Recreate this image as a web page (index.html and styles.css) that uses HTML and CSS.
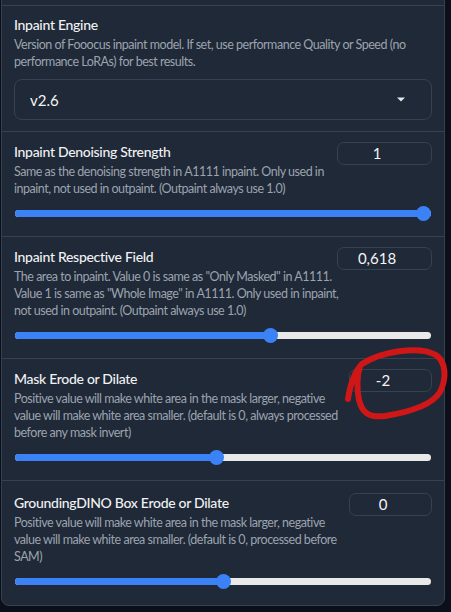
FILE: index.html
```html
<!DOCTYPE html>
<html lang="en">
<head>
<meta charset="utf-8">
<link rel="stylesheet" href="styles.css">
</head>
<body>
<div class="panel">
  <div class="spacer"></div>

  <section class="block">
    <div class="label">Inpaint Engine</div>
    <div class="info">Version of Fooocus inpaint model. If set, use performance Quality or Speed (no<br>performance LoRAs) for best results.</div>
    <div class="dropdown">
      <span class="value">v2.6</span>
      <svg class="caret" width="8" height="5" viewBox="0 0 8 5"><path d="M0 0.5 L8 0.5 L4 4.5 Z" fill="#e5e7eb"/></svg>
    </div>
  </section>

  <section class="block">
    <div class="head">
      <div class="text">
        <div class="label">Inpaint Denoising Strength</div>
        <div class="info">Same as the denoising strength in A1111 inpaint. Only used in<br>inpaint, not used in outpaint. (Outpaint always use 1.0)</div>
      </div>
      <div class="num wide">1</div>
    </div>
    <div class="slider" style="--p:1"><div class="fill"></div><div class="thumb"></div></div>
  </section>

  <section class="block">
    <div class="head">
      <div class="text">
        <div class="label">Inpaint Respective Field</div>
        <div class="info">The area to inpaint. Value 0 is same as "Only Masked" in A1111.<br>Value 1 is same as "Whole Image" in A1111. Only used in inpaint,<br>not used in outpaint. (Outpaint always use 1.0)</div>
      </div>
      <div class="num wide">0,618</div>
    </div>
    <div class="slider" style="--p:0.618"><div class="fill"></div><div class="thumb"></div></div>
  </section>

  <section class="block">
    <div class="head">
      <div class="text">
        <div class="label">Mask Erode or Dilate</div>
        <div class="info">Positive value will make white area in the mask larger, negative<br>value will make white area smaller. (default is 0, always processed<br>before any mask invert)</div>
      </div>
      <div class="num narrow">-2</div>
    </div>
    <div class="slider" style="--p:0.4844"><div class="fill"></div><div class="thumb"></div></div>
  </section>

  <section class="block last">
    <div class="head">
      <div class="text">
        <div class="label">GroundingDINO Box Erode or Dilate</div>
        <div class="info">Positive value will make white area in the mask larger, negative<br>value will make white area smaller. (default is 0, processed before<br>SAM)</div>
      </div>
      <div class="num narrow">0</div>
    </div>
    <div class="slider" style="--p:0.5"><div class="fill"></div><div class="thumb"></div></div>
  </section>
</div>

<svg class="scribble" width="451" height="612" viewBox="0 0 451 612">
  <path d="M348 399 C350 386 354 372 362 364 C380 352 418 345 436 355 C446 362 447 378 440 392 C432 405 410 412 385 416 C368 418 362 412 359 400 C357 390 357 376 360 366"
        fill="none" stroke="#d01717" stroke-width="6" stroke-linecap="round" stroke-linejoin="round"/>
</svg>
</body>
</html>
```

FILE: styles.css
```css
html, body {
  margin: 0;
  padding: 0;
}
body {
  background: #0b0f19;
  width: 451px;
  height: 612px;
  overflow: hidden;
  position: relative;
  font-family: "Lato", "Source Sans Pro", "Noto Sans", sans-serif;
}
.panel {
  box-sizing: border-box;
  width: 444px;
  margin: -12px 0 0 1px;
  background: #1f2937;
  border: 1px solid #374151;
  border-radius: 8px;
}
.spacer {
  height: 16px;
  border-bottom: 1px solid #374151;
}
.block {
  padding: 10px 12px 15px 12px;
  border-bottom: 1px solid #374151;
}
.block:first-of-type {
  padding-top: 9px;
  padding-bottom: 11px;
}
.block.last {
  border-bottom: none;
  padding-top: 12px;
  padding-bottom: 16px;
}
.label {
  color: #f0f1f3;
  font-size: 14px;
  letter-spacing: -0.3px;
  line-height: 20px;
  font-weight: 500;
  white-space: nowrap;
}
.info {
  margin-top: 1px;
  color: #9ca3af;
  font-size: 12.5px;
  letter-spacing: -0.48px;
  line-height: 17px;
  white-space: nowrap;
}
.text {
  min-width: 0;
}
.dropdown {
  margin-top: 9px;
  height: 39px;
  border: 1px solid #374151;
  border-radius: 8px;
  display: flex;
  align-items: center;
  justify-content: space-between;
  padding: 0 26px 0 15px;
}
.dropdown .value {
  color: #f3f4f6;
  font-size: 15px;
}
.caret {
  display: block;
}
.head {
  display: flex;
  align-items: flex-start;
  justify-content: space-between;
  gap: 8px;
}
.num {
  box-sizing: border-box;
  height: 23px;
  border: 1px solid #374151;
  border-radius: 7px;
  color: #f3f4f6;
  font-size: 15px;
  line-height: 21px;
  text-align: center;
  padding-right: 15px;
  flex: none;
}
.num.wide { width: 95px; }
.num.narrow { width: 83px; }
.slider {
  position: relative;
  margin: 9px 0 0 1px;
  width: 416px;
  height: 15px;
}
.slider::before {
  content: "";
  position: absolute;
  left: 0;
  right: 0;
  top: 4px;
  height: 7px;
  border-radius: 4px;
  background: #e9e9e9;
}
.fill {
  position: absolute;
  left: 0;
  top: 4px;
  height: 7px;
  border-radius: 4px;
  background: #3b82f6;
  width: calc(var(--p) * (100% - 15px) + 7.5px);
}
.thumb {
  position: absolute;
  top: 0;
  left: calc(var(--p) * (100% - 15px));
  width: 15px;
  height: 15px;
  border-radius: 50%;
  background: #3b82f6;
}
.scribble {
  position: absolute;
  left: 0;
  top: 0;
  pointer-events: none;
}
```
